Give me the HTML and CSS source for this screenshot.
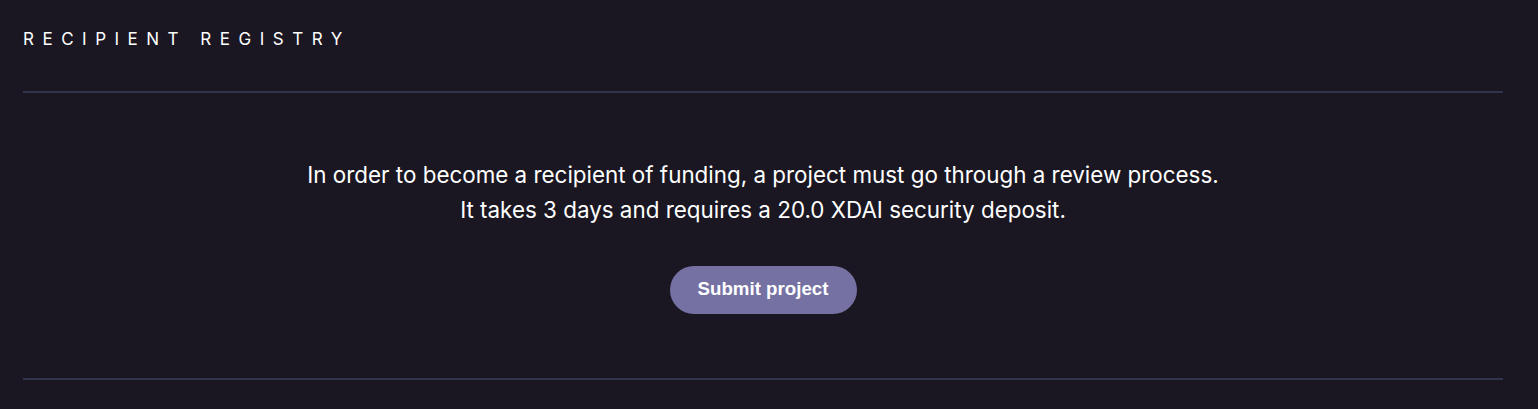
FILE: index.html
```html
<!DOCTYPE html>
<html>
<head>
<meta charset="utf-8">
<link rel="stylesheet" href="styles.css">
</head>
<body>
<main class="page">
  <h2 class="title">Recipient registry</h2>
  <hr class="divider">
  <section class="intro">
    <p class="lead">In order to become a recipient of funding, a project must go through a review process.<br>It takes 3 days and requires a 20.0 XDAI security deposit.</p>
    <button class="btn">Submit project</button>
  </section>
  <hr class="divider">
</main>
</body>
</html>
```
FILE: styles.css
```css
html, body {
  margin: 0;
  padding: 0;
  background: #1a1722;
  color: #fff;
}
.page {
  padding: 0 35px 0 23px;
}
.title {
  margin: 0;
  padding-top: 29px;
  font-family: "Inter", sans-serif;
  font-weight: 400;
  font-size: 17px;
  line-height: 20px;
  letter-spacing: 0.5em;
  text-transform: uppercase;
}
.divider {
  margin: 42px 0 0;
  border: 0;
  height: 2px;
  background: #30344c;
}
.intro {
  display: flex;
  flex-direction: column;
  align-items: center;
  padding: 64px 0 64px;
}
.lead {
  margin: 0;
  text-align: center;
  font-family: "Inter", sans-serif;
  font-size: 22.4px;
  line-height: 35px;
}
.btn {
  margin-top: 39px;
  width: 187px;
  height: 48px;
  border: 0;
  border-radius: 24px;
  background: #7671a3;
  color: #fff;
  font-family: "Liberation Sans", Arial, sans-serif;
  font-weight: 700;
  font-size: 18.7px;
  padding: 0 0 2px;
}
.intro + .divider {
  margin-top: 0;
}
```
